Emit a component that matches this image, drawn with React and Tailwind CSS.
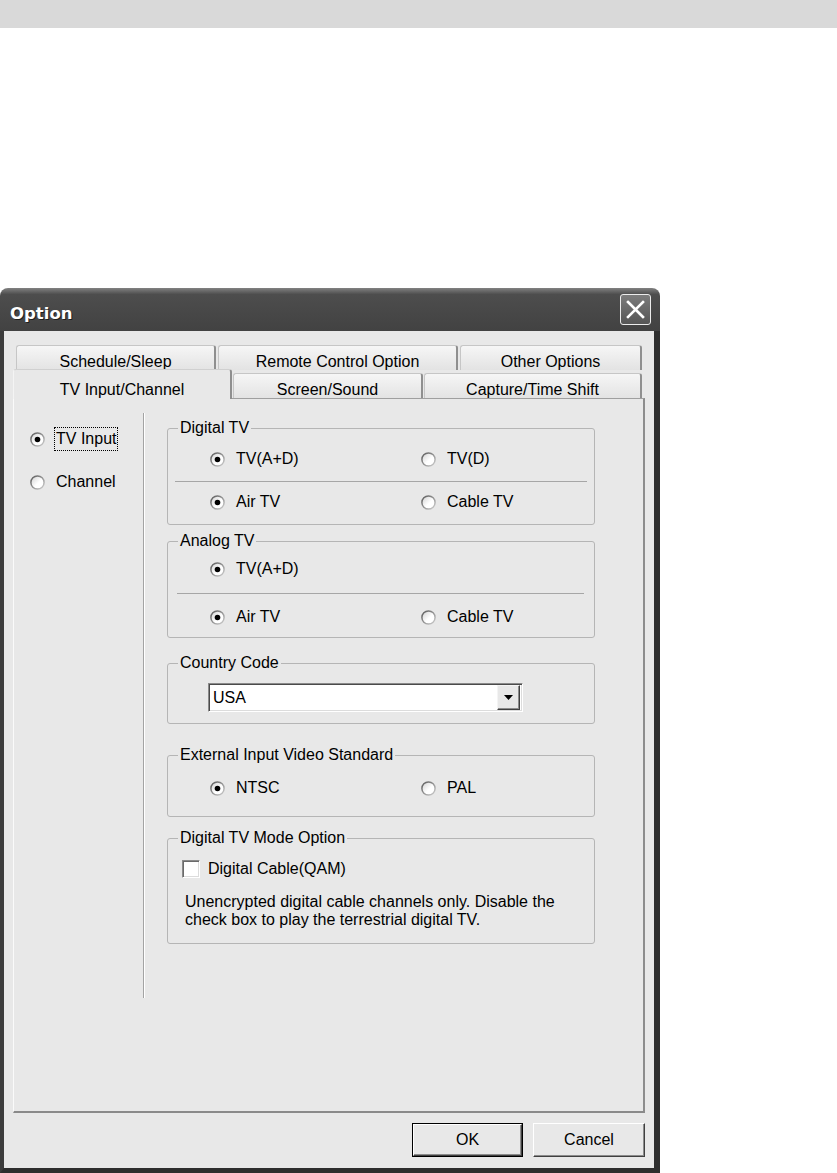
import React from "react"

const Radio = ({ checked }) => (
    <svg width="15" height="15" viewBox="0 0 15 15" className="shrink-0">
        <defs>
            <linearGradient id="radioRing" x1="0" y1="0" x2="1" y2="1">
                <stop offset="0" stopColor="#5a5a5a" />
                <stop offset="1" stopColor="#cfcfcf" />
            </linearGradient>
            <linearGradient id="radioFill" x1="0" y1="0" x2="1" y2="1">
                <stop offset="0" stopColor="#cfcfcf" />
                <stop offset="0.55" stopColor="#ffffff" />
            </linearGradient>
        </defs>
        <circle cx="7.5" cy="7.5" r="6.6" fill="url(#radioFill)" stroke="url(#radioRing)" strokeWidth="1.5" />
        {checked && <circle cx="7.5" cy="7.5" r="2.8" fill="#000" />}
    </svg>
)

const RadioOption = ({ label, checked }) => (
    <div className="flex items-center gap-[11px] h-[20px] leading-[20px]">
        <Radio checked={checked} />
        <span>{label}</span>
    </div>
)

// two columns of radios, as in the group boxes
const RadioRow = ({ left, right, className }) => (
    <div className={`flex pl-[42px] ${className}`}>
        <div className="w-[211px]">{left}</div>
        <div>{right}</div>
    </div>
)

const Group = ({ title, className, children }) => (
    <fieldset className={`border border-[#b5b5b5] rounded-[3px] ${className}`}>
        <legend className="ml-[10px] px-[2px] leading-[18px]">{title}</legend>
        {children}
    </fieldset>
)

const BackTab = ({ className, children }) => (
    <div
        className={`h-[25px] pt-[7px] text-center leading-[18px] rounded-t-[3px] border-t border-l border-t-[#c6c6c6] border-l-[#c6c6c6] border-r-2 border-r-[#8f8f8f] bg-linear-to-b from-[#f6f6f6] to-[#e3e3e3] ${className}`}
    >
        {children}
    </div>
)

const RaisedButton = ({ label, isDefault, className }) => (
    <div className={`h-[34px] ${isDefault ? "border border-black" : ""} ${className}`}>
        <div className="h-full flex items-center justify-center bg-[#e8e8e8] border-t border-l border-t-white border-l-white border-r border-b border-r-[#404040] border-b-[#404040] shadow-[inset_-1px_-1px_0_#8c8c8c]">
            {label}
        </div>
    </div>
)

const App = () => {
    return (
        <div className="w-[837px] h-[1173px] bg-white overflow-hidden font-['Liberation_Sans',Arial,sans-serif] text-[16px] text-black">
            <div className="h-[28px] bg-[#d9d9d9]" />

            {/* dialog */}
            <div className="mt-[260px] w-[660px] h-[885px] flex flex-col">
                <div className="h-[43px] shrink-0 flex items-center justify-between pl-[10px] pr-[9px] rounded-t-[8px] bg-linear-to-b from-[#828282] via-[#4d4d4d] via-15% to-[#424242]">
                    <span className="mt-[9px] font-['DejaVu_Sans',sans-serif] font-bold text-[16.5px] text-white [text-shadow:1px_1px_0_#1e1e1e]">
                        Option
                    </span>
                    <div className="w-[31px] h-[31px] rounded-[3px] border border-[#ececec] bg-linear-to-b from-[#7c7c7c] to-[#565656] flex items-center justify-center">
                        <svg width="21" height="21" viewBox="0 0 21 21">
                            <path d="M3 3 L18 18 M18 3 L3 18" stroke="#fff" strokeWidth="2.6" strokeLinecap="square" />
                        </svg>
                    </div>
                </div>

                <div className="flex-1 flex flex-col bg-[#e8e8e8] border-l-4 border-l-[#3c3c3c] border-r-[6px] border-r-[#2e2e2e] border-b-[5px] border-b-[#2e2e2e] px-[9px] pt-[14px]">
                    {/* tabs */}
                    <div className="flex gap-[2px] pl-[3px]">
                        <BackTab className="w-[200px]">Schedule/Sleep</BackTab>
                        <BackTab className="w-[240px]">Remote Control Option</BackTab>
                        <BackTab className="w-[182px]">Other Options</BackTab>
                    </div>
                    <div className="flex gap-px h-[29px] -mt-px items-start">
                        <div className="relative z-10 w-[219px] h-[30px] pt-[11px] text-center leading-[18px] rounded-t-[3px] border-t border-l border-t-[#d0d0d0] border-l-[#f4f4f4] border-r-2 border-r-[#8f8f8f] bg-[#e8e8e8]">
                            TV Input/Channel
                        </div>
                        <BackTab className="mt-[4px] w-[190px] pt-[6px]">Screen/Sound</BackTab>
                        <BackTab className="mt-[4px] w-[218px] pt-[6px]">Capture/Time Shift</BackTab>
                    </div>

                    {/* tab page */}
                    <div className="h-[715px] shrink-0 flex border-t border-t-[#9f9f9f] border-l border-l-[#fafafa] border-r-2 border-r-[#8c8c8c] border-b-2 border-b-[#8a8a8a] bg-[#e8e8e8]">
                        <div className="w-[129px] pl-[16px] pt-[28px] flex flex-col gap-[19px]">
                            <div className="flex items-center h-[24px]">
                                <Radio checked />
                                <span className="ml-[9px] px-px leading-[22px] border border-dotted border-black">TV Input</span>
                            </div>
                            <div className="flex items-center h-[24px]">
                                <Radio />
                                <span className="ml-[9px] px-px leading-[22px] border border-transparent">Channel</span>
                            </div>
                        </div>

                        <div className="w-[2px] h-[585px] mt-[14px] border-l border-l-[#a3a3a3] border-r border-r-white" />

                        <div className="ml-[22px] w-[428px] pt-[20px] flex flex-col">
                            <Group title="Digital TV" className="pt-[12px] pb-[12px]">
                                <RadioRow left={<RadioOption label="TV(A+D)" checked />} right={<RadioOption label="TV(D)" />} />
                                <div className="mt-[12px] ml-[7px] mr-[7px] h-px bg-[#a6a6a6]" />
                                <RadioRow className="mt-[10px]" left={<RadioOption label="Air TV" checked />} right={<RadioOption label="Cable TV" />} />
                            </Group>

                            <Group title="Analog TV" className="mt-[7px] pt-[9px] pb-[10px]">
                                <RadioRow left={<RadioOption label="TV(A+D)" checked />} />
                                <div className="mt-[14px] ml-[9px] mr-[10px] h-px bg-[#a6a6a6]" />
                                <RadioRow className="mt-[13px]" left={<RadioOption label="Air TV" checked />} right={<RadioOption label="Cable TV" />} />
                            </Group>

                            <Group title="Country Code" className="mt-[16px] pt-[11px] pb-[11px]">
                                <div className="ml-[40px] w-[315px] h-[29px] flex items-center bg-white border-t border-l border-t-[#8a8a8a] border-l-[#8a8a8a] border-r border-b border-r-white border-b-white shadow-[inset_1px_1px_0_#4a4a4a,inset_-1px_-1px_0_#dcdcdc]">
                                    <span className="flex-1 pl-[4px] leading-[20px]">USA</span>
                                    <div className="w-[23px] h-[25px] mr-[2px] flex items-center justify-center bg-[#e8e8e8] border-t border-l border-t-[#f4f4f4] border-l-[#f4f4f4] border-r border-b border-r-[#404040] border-b-[#404040] shadow-[inset_-1px_-1px_0_#8c8c8c]">
                                        <svg width="9" height="5" viewBox="0 0 9 5">
                                            <polygon points="0,0 9,0 4.5,5" fill="#000" />
                                        </svg>
                                    </div>
                                </div>
                            </Group>

                            <Group title="External Input Video Standard" className="mt-[22px] pt-[14px] pb-[18px]">
                                <RadioRow left={<RadioOption label="NTSC" checked />} right={<RadioOption label="PAL" />} />
                            </Group>

                            <Group title="Digital TV Mode Option" className="mt-[12px] pt-[12px] pb-[14px]">
                                <div className="flex items-center h-[20px] pl-[14px] gap-[8px]">
                                    <div className="w-[18px] h-[18px] bg-white border-t border-l border-t-[#8a8a8a] border-l-[#8a8a8a] border-r border-b border-r-white border-b-white shadow-[inset_1px_1px_0_#6a6a6a,inset_-1px_-1px_0_#dcdcdc]" />
                                    <span className="leading-[20px]">Digital Cable(QAM)</span>
                                </div>
                                <p className="mt-[14px] pl-[17px] leading-[18px]">
                                    Unencrypted digital cable channels only. Disable the
                                    <br />
                                    check box to play the terrestrial digital TV.
                                </p>
                            </Group>
                        </div>
                    </div>

                    {/* dialog buttons */}
                    <div className="flex justify-end gap-[10px] pt-[10px]">
                        <RaisedButton label="OK" isDefault className="w-[111px]" />
                        <RaisedButton label="Cancel" className="w-[112px]" />
                    </div>
                </div>
            </div>
        </div>
    )
}

export default App
